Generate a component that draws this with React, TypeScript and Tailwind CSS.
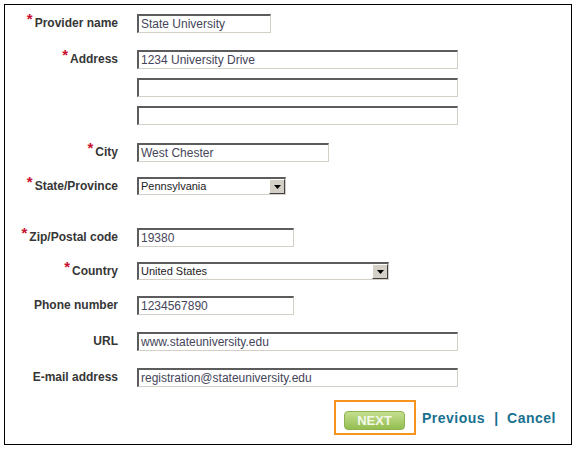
import type { ReactNode } from "react";

const font = { fontFamily: '"Liberation Sans", Arial, sans-serif' };

function Label({ text, required }: { text: string; required?: boolean }) {
  return (
    <div className="w-[113px] shrink-0 text-right text-[12px] font-bold leading-[18px] text-[#363636]">
      {required && (
        <span className="relative top-[-3px] mr-[2px] text-[15px] leading-none text-[#c8102e]">*</span>
      )}
      {text}
    </div>
  );
}

function TextBox({ value, width }: { value?: string; width: string }) {
  return (
    <div
      className={`${width} h-[19px] border-t-2 border-l-2 border-b border-r border-t-[#5c5c5c] border-l-[#5c5c5c] border-b-[#d4d0c8] border-r-[#d4d0c8] bg-white pl-[2px] text-[12px] leading-[17px] text-[#45455a] whitespace-nowrap overflow-hidden`}
    >
      {value}
    </div>
  );
}

function SelectBox({ value, width }: { value: string; width: string }) {
  return (
    <div
      className={`${width} h-[18px] flex border-t-2 border-l-2 border-b border-r border-t-[#5c5c5c] border-l-[#5c5c5c] border-b-[#d4d0c8] border-r-[#d4d0c8] bg-white`}
    >
      <div className="flex-1 pl-[2px] text-[11px] leading-[15px] text-[#222]">{value}</div>
      <div className="w-[16px] h-[15px] flex items-center justify-center bg-[#d4d0c8] border border-t-white border-l-white border-b-[#404040] border-r-[#404040]">
        <svg width="7" height="4" viewBox="0 0 7 4">
          <path d="M0 0h7L3.5 4z" fill="#000" />
        </svg>
      </div>
    </div>
  );
}

function Row({ mt, children }: { mt: string; children: ReactNode }) {
  return <div className={`flex items-start ${mt}`}>{children}</div>;
}

export default function App() {
  return (
    <div className="w-[576px] h-[449px] bg-white pt-[4px] pl-[4px]" style={font}>
      <div className="w-[568px] h-[441px] border border-black flex flex-col">
        <Row mt="mt-[9px]">
          <Label text="Provider name" required />
          <div className="ml-[19px]">
            <TextBox value="State University" width="w-[134px]" />
          </div>
        </Row>
        <Row mt="mt-[17px]">
          <Label text="Address" required />
          <div className="ml-[19px] flex flex-col gap-[9px]">
            <TextBox value="1234 University Drive" width="w-[321px]" />
            <TextBox width="w-[321px]" />
            <TextBox width="w-[321px]" />
          </div>
        </Row>
        <Row mt="mt-[18px]">
          <Label text="City" required />
          <div className="ml-[19px]">
            <TextBox value="West Chester" width="w-[192px]" />
          </div>
        </Row>
        <Row mt="mt-[15px]">
          <Label text="State/Province" required />
          <div className="ml-[19px]">
            <SelectBox value="Pennsylvania" width="w-[149px]" />
          </div>
        </Row>
        <Row mt="mt-[33px]">
          <Label text="Zip/Postal code" required />
          <div className="ml-[19px]">
            <TextBox value="19380" width="w-[157px]" />
          </div>
        </Row>
        <Row mt="mt-[15px]">
          <Label text="Country" required />
          <div className="ml-[19px]">
            <SelectBox value="United States" width="w-[252px]" />
          </div>
        </Row>
        <Row mt="mt-[16px]">
          <Label text="Phone number" />
          <div className="ml-[19px]">
            <TextBox value="1234567890" width="w-[157px]" />
          </div>
        </Row>
        <Row mt="mt-[17px]">
          <Label text="URL" />
          <div className="ml-[19px]">
            <TextBox value="www.stateuniversity.edu" width="w-[321px]" />
          </div>
        </Row>
        <Row mt="mt-[17px]">
          <Label text="E-mail address" />
          <div className="ml-[19px]">
            <TextBox value="registration@stateuniversity.edu" width="w-[321px]" />
          </div>
        </Row>
        <div className="mt-[13px] flex items-center justify-end pr-[15px]">
          <div className="w-[82px] h-[35px] border-2 border-[#f7941d] pl-[8px] pt-[6px]">
            <button className="w-[61px] h-[19px] rounded-[4px] border border-[#8db351] bg-gradient-to-b from-[#c4de8e] to-[#94be4f] text-[13px] font-bold leading-[17px] text-[#f4f9ea]">
              NEXT
            </button>
          </div>
          <a className="ml-[6px] pt-[2px] text-[14px] font-bold tracking-[0.5px] text-[#18708f]">Previous</a>
          <span className="mx-[9px] pt-[2px] text-[14px] font-bold text-[#18708f]">|</span>
          <a className="pt-[2px] text-[14px] font-bold tracking-[0.5px] text-[#18708f]">Cancel</a>
        </div>
      </div>
    </div>
  );
}
